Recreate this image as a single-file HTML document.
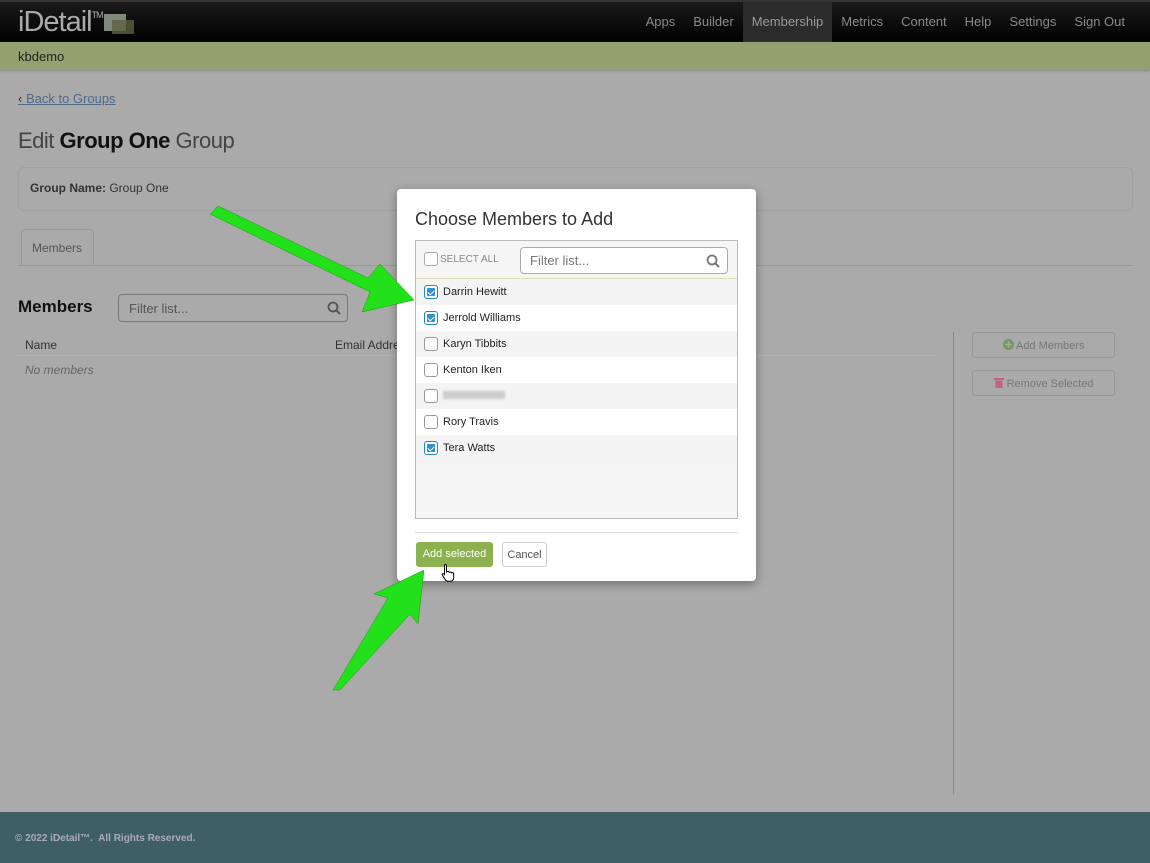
<!DOCTYPE html>
<html><head><style>
*{box-sizing:border-box;margin:0;padding:0}
body{width:1150px;height:863px;position:relative;overflow:hidden;background:#aaaaaa;font-family:"Liberation Sans",sans-serif;color:#222}
.hdr{position:absolute;left:0;top:0;width:1150px;height:42px;background:linear-gradient(#1a1a1a,#000);border-top:2px solid #333}
.logo{position:absolute;left:18px;top:4px;color:#aaa;font-size:29px;letter-spacing:-1px}
.logo sup{font-size:9px;vertical-align:top;position:relative;top:4px}
.nav{position:absolute;right:16px;top:0;height:40px;display:flex;font-size:13px;color:#8a8a8a}
.nav span{padding:12px 9px}
.nav .on{background:#2b2b2b;color:#9a9a9a}
.sub{position:absolute;top:42px;left:0;width:1150px;height:28px;background:#93a170;font-size:13px;color:#222;padding:7px 18px;box-shadow:0 1px 2px #888}
.abs{position:absolute}
.link{left:18px;top:91px;font-size:13px;color:#4e6a8a;text-decoration:underline}
h1{position:absolute;left:18px;top:128px;font-size:22px;font-weight:normal;color:#444;letter-spacing:-.5px}
h1 b{color:#111}
.gbox{left:18px;top:167px;width:1115px;height:44px;border:1px solid #a0a0a0;border-radius:6px;font-size:12px;padding:13px 11px;color:#333}
.tab{left:21px;top:229px;width:73px;height:37px;border:1px solid #999;border-bottom:none;border-radius:4px 4px 0 0;font-size:12px;color:#555;padding:11px 10px;background:#aaa}
.tline{left:18px;top:265px;width:1115px;height:1px;background:#999}
.filt{border:1px solid #777;border-radius:4px;background:#aaa;font-size:13px;color:#555;padding:6px 10px}
.btn{border:1px solid #999;border-radius:3px;font-size:11px;color:#777;text-align:center}
.modal{left:397px;top:189px;width:359px;height:392px;background:#fff;border-radius:4px;box-shadow:0 3px 10px rgba(0,0,0,.35)}
.list{position:absolute;left:18px;top:51px;width:323px;height:279px;border:1px solid #bbb;background:#f5f5f5}
.row{height:26px;font-size:11px;padding:7px 0 0 27px;position:relative;color:#222}
.row:nth-child(odd){background:#fff}.row:nth-child(even){background:#f4f4f4}
.cb{position:absolute;left:8px;top:6px;width:14px;height:14px;border:1px solid #999;border-radius:3px;background:#fff}
.cb.c{border-color:#1e88c8;background:#fff}
.cb.c:after{content:"";position:absolute;left:2px;top:2px;width:8px;height:8px;background:#2b93d0;border-radius:1px}
.cb.c:before{content:"";position:absolute;left:4px;top:3px;width:3px;height:5px;border:solid #fff;border-width:0 1.5px 1.5px 0;transform:rotate(45deg);z-index:2}
</style></head><body>
<div class="hdr"><div class="logo">iDetail<sup>TM</sup></div>
<div class="abs" style="left:104px;top:12px;width:22px;height:17px;background:#7d8a7a"></div><div class="abs" style="left:112px;top:18px;width:22px;height:14px;background:#5d6040;opacity:.8"></div>
<div class="nav"><span>Apps</span><span>Builder</span><span class="on">Membership</span><span>Metrics</span><span>Content</span><span>Help</span><span>Settings</span><span>Sign Out</span></div></div>
<div class="sub">kbdemo</div>
<div class="abs link"><span style="text-decoration:none;color:#333">‹ </span>Back to Groups</div>
<h1>Edit <b>Group One</b> Group</h1>
<div class="abs gbox"><b>Group Name:</b> Group One</div>
<div class="abs tab">Members</div><div class="abs tline"></div>
<div class="abs" style="left:18px;top:297px;font-size:17px;font-weight:bold;color:#111">Members</div>
<div class="abs filt" style="left:118px;top:294px;width:230px;height:28px">Filter list...</div>
<svg class="abs" style="left:327px;top:301px" width="14" height="14"><circle cx="6" cy="6" r="4.5" fill="none" stroke="#555" stroke-width="1.8"/><line x1="9.5" y1="9.5" x2="13" y2="13" stroke="#555" stroke-width="2"/></svg>
<div class="abs" style="left:25px;top:338px;font-size:12px;color:#333">Name</div>
<div class="abs" style="left:335px;top:338px;font-size:12px;color:#333">Email Address</div>
<div class="abs" style="left:18px;top:355px;width:918px;height:1px;background:#b5b98a"></div>
<div class="abs" style="left:25px;top:363px;font-size:12px;color:#666;font-style:italic">No members</div>
<div class="abs" style="left:953px;top:332px;width:1px;height:462px;background:#888"></div>
<div class="abs btn" style="left:972px;top:332px;width:143px;height:26px;padding-top:6px"><svg width="11" height="11" style="vertical-align:-1px"><circle cx="5.5" cy="5.5" r="5.5" fill="#7a9a5a"/><path d="M5.5 2.5v6M2.5 5.5h6" stroke="#aaa" stroke-width="1.6"/></svg> Add Members</div>
<div class="abs btn" style="left:972px;top:370px;width:143px;height:26px;padding-top:6px"><svg width="10" height="11" style="vertical-align:-1px"><rect x="0" y="1" width="10" height="2" fill="#c86080"/><rect x="1.5" y="3.5" width="7" height="7.5" fill="#c86080"/></svg> Remove Selected</div>
<div class="abs" style="left:0;top:812px;width:1150px;height:51px;background:#3e6064;color:#aab;font-size:10px;font-weight:bold;padding:21px 15px">© 2022 iDetail™.&nbsp; All Rights Reserved.</div>

<div class="abs modal">
<div class="abs" style="left:18px;top:20px;font-size:18px;color:#333">Choose Members to Add</div>
<div class="list">
<div style="height:38px;border-bottom:1px solid #dde0b8;position:relative;background:#f5f5f5">
<div class="cb" style="top:11px;border-color:#aaa"></div>
<div class="abs" style="left:24px;top:13px;font-size:10px;color:#888">SELECT ALL</div>
<div class="abs" style="left:104px;top:6px;width:208px;height:27px;border:1px solid #aaa;border-radius:4px;background:#fff;font-size:13px;color:#777;padding:5px 9px">Filter list...
<svg style="position:absolute;right:7px;top:6px" width="14" height="14"><circle cx="6" cy="6" r="4.5" fill="none" stroke="#777" stroke-width="1.8"/><line x1="9.5" y1="9.5" x2="13" y2="13" stroke="#777" stroke-width="2"/></svg></div></div>
<div class="row"><div class="cb c"></div>Darrin Hewitt</div>
<div class="row"><div class="cb c"></div>Jerrold Williams</div>
<div class="row"><div class="cb"></div>Karyn Tibbits</div>
<div class="row"><div class="cb"></div>Kenton Iken</div>
<div class="row"><div class="cb"></div><span style="display:inline-block;width:62px;height:8px;background:#ccc;filter:blur(1px)"></span></div>
<div class="row"><div class="cb"></div>Rory Travis</div>
<div class="row"><div class="cb c"></div>Tera Watts</div>
</div>
<div class="abs" style="left:18px;top:343px;width:323px;height:1px;background:#ddd"></div>
<div class="abs" style="left:19px;top:353px;width:77px;height:25px;background:#8bb24e;border-radius:3px;color:#fff;font-size:11px;text-align:center;padding-top:6px">Add selected</div>
<div class="abs" style="left:105px;top:353px;width:45px;height:25px;border:1px solid #ccc;border-radius:3px;color:#555;font-size:11px;text-align:center;padding-top:6px">Cancel</div>
</div>
<svg class="abs" style="left:441px;top:563px" width="16" height="20"><path d="M4 1.5c1 0 1.5.5 1.5 1.5v6l1-.5c1-.3 1.7.2 1.7.8l.8-.3c.8-.2 1.5.3 1.5.8l.8-.2c.8 0 1.4.4 1.4 1.2v4c0 2-1.5 3.5-3.5 3.5H7c-1.2 0-2-.6-2.7-1.5L1.3 12c-.5-.7.4-1.8 1.4-1.1l.8.7V3c0-1 .3-1.5.5-1.5z" fill="#fff" stroke="#000" stroke-width="1"/></svg>

<svg class="abs" style="left:0;top:0" width="1150" height="863">
<polygon points="210,214 218,206 368,278 380,264 414,300 362,312 370,292" fill="#22e01a" stroke="#1a9a12" stroke-width=".5"/>
<polygon points="333,690 340,690 410,614 418,624 424,570 374,594 388,598" fill="#22e01a" stroke="#1a9a12" stroke-width=".5"/>
</svg>
</body></html>
